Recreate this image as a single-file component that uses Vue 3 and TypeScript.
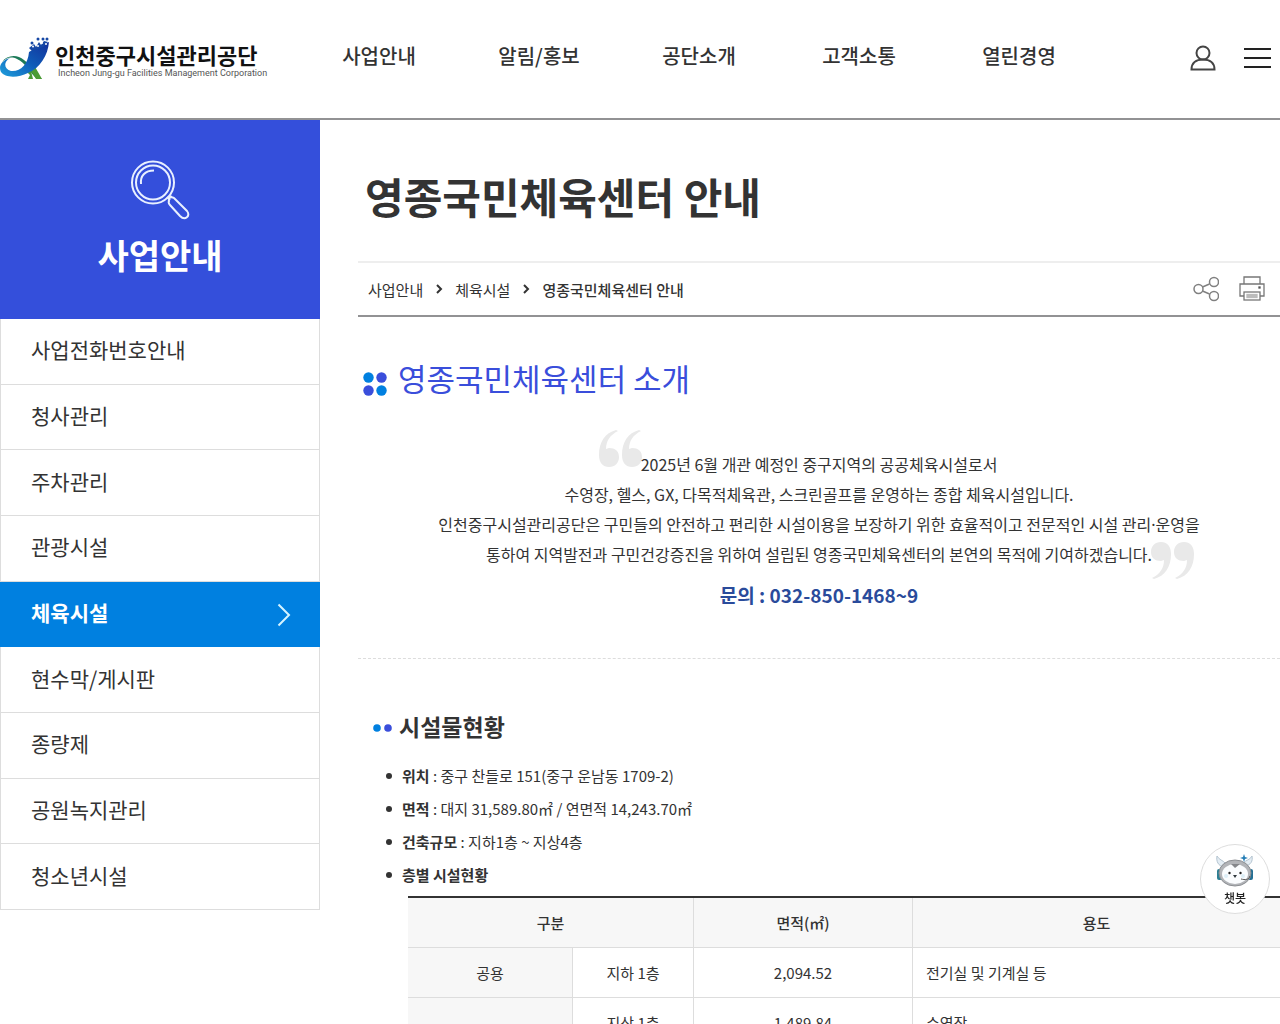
<script setup lang="ts">
interface MenuItem { label: string; active?: boolean }

const topMenu: string[] = ['사업안내', '알림/홍보', '공단소개', '고객소통', '열린경영']

const sideMenu: MenuItem[] = [
  { label: '사업전화번호안내' },
  { label: '청사관리' },
  { label: '주차관리' },
  { label: '관광시설' },
  { label: '체육시설', active: true },
  { label: '현수막/게시판' },
  { label: '종량제' },
  { label: '공원녹지관리' },
  { label: '청소년시설' },
]

const facts: { name: string; value?: string }[] = [
  { name: '위치', value: '중구 찬들로 151(중구 운남동 1709-2)' },
  { name: '면적', value: '대지 31,589.80㎡ / 연면적 14,243.70㎡' },
  { name: '건축규모', value: '지하1층 ~ 지상4층' },
  { name: '층별 시설현황' },
]

const floors: { group: string; floor: string; area: string; use: string }[] = [
  { group: '공용', floor: '지하 1층', area: '2,094.52', use: '전기실 및 기계실 등' },
  { group: '', floor: '지상 1층', area: '1,489.84', use: '수영장' },
]
</script>

<template>
  <div class="page">
    <header class="header">
      <a href="#" class="logo">
        <svg class="logo-mark" width="50" height="44" viewBox="0 0 50 44" aria-hidden="true">
          <defs>
            <linearGradient id="wave" x1="1" y1="0" x2="0" y2="1">
              <stop offset="0" stop-color="#14309a" />
              <stop offset="0.5" stop-color="#0f5cb8" />
              <stop offset="1" stop-color="#1f9fdc" />
            </linearGradient>
          </defs>
          <path d="M2 26C7 19 17 18 24 24C32 30 35 38 42 43H37C30 37 26 27 17 23C11 20 6 22 2 26Z" fill="#1c7a58" />
          <path d="M27 36L34 29L42 43H36L31 35L33 43H28L30 39Z" fill="#4b9b35" />
          <path d="M29 16L34 13L38 12L42 9L49 6C48 19 40 32 28 37C18 42 5 42 1 36C-2 30 2 24 10 22C3 26 4 33 11 35C20 36 28 29 29 16Z" fill="url(#wave)" />
          <g fill="#1748a5">
            <circle cx="32" cy="7" r="1.500" /><circle cx="38" cy="3" r="1.500" />
            <circle cx="43" cy="3" r="1.500" /><circle cx="47" cy="3" r="1.500" />
            <path d="M29 12L34 8L36 11L39 6L41 9L44 5L48 6L43 11L32 15Z" />
          </g>
          <g fill="#fff">
            <circle cx="33" cy="10.500" r="1" /><circle cx="38" cy="10" r="1" />
            <circle cx="42" cy="7" r="1" /><circle cx="46" cy="8" r="1" />
          </g>
        </svg>
        <span class="logo-text">
          <strong>인천중구시설관리공단</strong>
          <span>Incheon Jung-gu Facilities Management Corporation</span>
        </span>
      </a>
      <nav class="top-nav" aria-label="주메뉴">
        <a v-for="item in topMenu" :key="item" href="#">{{ item }}</a>
      </nav>
      <div class="tools">
        <button type="button" aria-label="로그인">
          <svg width="26" height="26" viewBox="0 0 26 26" fill="none" stroke="#444" stroke-width="2">
            <circle cx="13" cy="8" r="6.500" />
            <path d="M1.500 24.500C1.500 18 6 14.500 13 14.500S24.500 18 24.500 24.500Z" />
          </svg>
        </button>
        <button type="button" aria-label="전체메뉴">
          <svg width="27" height="22" viewBox="0 0 27 22" stroke="#222" stroke-width="2">
            <path d="M0 2H27M0 11H27M0 20H27" />
          </svg>
        </button>
      </div>
    </header>

    <div class="body">
      <aside class="side">
        <div class="side-head">
          <svg width="60" height="60" viewBox="0 0 60 60" fill="none" stroke="#e8f0ff" stroke-width="2" aria-hidden="true">
            <circle cx="23" cy="22.500" r="21" />
            <circle cx="23" cy="22.500" r="17" />
            <path d="M11 24C10 16 15 10.500 24 10.500" />
            <path d="M37 37L40 40M39 36L42 37M39 41C38 38 41 36 44 38L57 51C61 56 55 61 50 56L40 45Q38 43 39 41Z" />
          </svg>
          <h2>사업안내</h2>
        </div>
        <ul class="side-menu">
          <li v-for="item in sideMenu" :key="item.label">
            <a href="#" :class="{ active: item.active }">
              {{ item.label }}
              <svg v-if="item.active" width="14" height="24" viewBox="0 0 14 24" fill="none" stroke="#d5f4ff" stroke-width="2">
                <path d="M1.500 1.500L12 12L1.500 22.500" />
              </svg>
            </a>
          </li>
        </ul>
      </aside>

      <main class="main">
        <h1>영종국민체육센터 안내</h1>
        <div class="crumb-bar">
          <nav class="crumbs" aria-label="현재 위치">
            <a href="#">사업안내</a>
            <svg width="8" height="10" viewBox="0 0 8 10"><path d="M2 1L6 5L2 9" /></svg>
            <a href="#">체육시설</a>
            <svg width="8" height="10" viewBox="0 0 8 10"><path d="M2 1L6 5L2 9" /></svg>
            <a href="#" class="current">영종국민체육센터 안내</a>
          </nav>
          <div class="page-tools">
            <button type="button" aria-label="공유">
              <svg width="26" height="26" viewBox="0 0 26 26" fill="none" stroke="#808080" stroke-width="1.500">
                <circle cx="5.500" cy="13" r="4.500" /><circle cx="21" cy="6" r="4.500" /><circle cx="21" cy="20" r="4.500" />
                <path d="M9.500 11L16.500 8M9.500 15L16.500 18" />
              </svg>
            </button>
            <button type="button" aria-label="인쇄">
              <svg width="26" height="26" viewBox="0 0 26 26" fill="none" stroke="#777" stroke-width="1.300">
                <path d="M5 8V1H21V8M5 20H1V8H25V20H21" />
                <rect x="5" y="16" width="16" height="8" />
                <rect x="8" y="18.500" width="10" height="3" fill="#bbb" stroke="#bbb" />
                <rect x="20" y="11" width="1" height="1" fill="#555" stroke="#555" />
              </svg>
            </button>
          </div>
        </div>

        <h2 class="section-title">
          <svg width="24" height="24" viewBox="0 0 24 24" aria-hidden="true">
            <circle cx="5.500" cy="5.500" r="5.200" fill="#0080e0" /><circle cx="18.500" cy="5.500" r="5.200" fill="#3a4edb" />
            <circle cx="5.500" cy="18.500" r="5.200" fill="#3a4edb" /><circle cx="18.500" cy="18.500" r="5.200" fill="#0080e0" />
          </svg>
          영종국민체육센터 소개
        </h2>

        <div class="intro">
          <div class="quote">
            <svg class="mark open" width="44" height="37" viewBox="0 0 44 37" aria-hidden="true">
              <path d="M17 0C6 3 0 12 0 25C0 33 4 37 10 37S20 33 20 27S16 18 10 18L7 19C7 11 11 5 19 1Z" />
              <path d="M40 0C29 3 23 12 23 25C23 33 27 37 33 37S43 33 43 27S39 18 33 18L30 19C30 11 34 5 42 1Z" />
            </svg>
            <p>
              2025년 6월 개관 예정인 중구지역의 공공체육시설로서<br>
              수영장, 헬스, GX, 다목적체육관, 스크린골프를 운영하는 종합 체육시설입니다.<br>
              인천중구시설관리공단은 구민들의 안전하고 편리한 시설이용을 보장하기 위한 효율적이고 전문적인 시설 관리<span class="dot">·</span>운영을<br>
              통하여 지역발전과 구민건강증진을 위하여 설립된 영종국민체육센터의 본연의 목적에 기여하겠습니다.
            </p>
            <svg class="mark close" width="44" height="37" viewBox="0 0 44 37" aria-hidden="true">
              <g transform="rotate(180 22 18.500)">
                <path d="M17 0C6 3 0 12 0 25C0 33 4 37 10 37S20 33 20 27S16 18 10 18L7 19C7 11 11 5 19 1Z" />
                <path d="M40 0C29 3 23 12 23 25C23 33 27 37 33 37S43 33 43 27S39 18 33 18L30 19C30 11 34 5 42 1Z" />
              </g>
            </svg>
          </div>
          <p class="contact">문의 : 032-850-1468~9</p>
        </div>

        <h3 class="sub-title">
          <svg width="20" height="8" viewBox="0 0 20 8" aria-hidden="true">
            <circle cx="4" cy="4" r="3.800" fill="#0080e0" /><circle cx="15" cy="4" r="3.800" fill="#3a4edb" />
          </svg>
          시설물현황
        </h3>
        <ul class="facts">
          <li v-for="fact in facts" :key="fact.name">
            <strong>{{ fact.name }}</strong><template v-if="fact.value"> : {{ fact.value }}</template>
          </li>
        </ul>
        <table class="floors">
          <colgroup><col class="c1"><col class="c2"><col class="c3"><col></colgroup>
          <thead>
            <tr><th colspan="2" scope="col">구분</th><th scope="col">면적(㎡)</th><th scope="col">용도</th></tr>
          </thead>
          <tbody>
            <tr v-for="row in floors" :key="row.floor">
              <th scope="row">{{ row.group }}</th>
              <td>{{ row.floor }}</td>
              <td>{{ row.area }}</td>
              <td class="use">{{ row.use }}</td>
            </tr>
          </tbody>
        </table>
      </main>
    </div>

    <button type="button" class="chatbot">
      <svg width="40" height="36" viewBox="0 0 40 36" aria-hidden="true">
        <path d="M9 13C3 12 1 7 2 2C4 6 8 6 11 10ZM30 12C36 11 38 7 37 2C35 6 31 6 28 9Z" fill="#e4edf4" stroke="#b4c4d0" />
        <rect x="2" y="15" width="5" height="11" rx="2" fill="#2d7f93" /><rect x="33" y="15" width="5" height="11" rx="2" fill="#246f94" />
        <ellipse cx="20" cy="19" rx="16" ry="13" fill="#b2b4b8" stroke="#8c8f93" />
        <ellipse cx="20" cy="20" rx="13" ry="10" fill="#fafcfe" />
        <path d="M16 10H25L20 14Z" fill="#85878b" />
        <circle cx="14.500" cy="19" r="1.200" fill="#222" /><circle cx="25.500" cy="19" r="1.200" fill="#222" />
        <path d="M18 21H22L20 24Z" fill="#30383e" />
        <circle cx="11" cy="22" r="2" fill="#dceef7" /><circle cx="28" cy="22" r="2" fill="#dceef7" />
        <path d="M35 22C34 26 30 26 26 25" fill="none" stroke="#555" />
        <path d="M29 0L30 3L33 4L30 5L29 8L28 5L25 4L28 3Z" fill="#247db5" />
      </svg>
      <span>챗봇</span>
    </button>
  </div>
</template>

<style>
body {
  margin: 0;
  background: #fff;
}
</style>

<style scoped>
.page {
  height: 100vh;
  overflow: hidden;
  color: #333;
  font-family: "Noto Sans CJK KR", "Noto Sans", sans-serif;
  font-size: 16px;
}
h1, h2, h3, p, ul {
  margin: 0;
  padding: 0;
}
ul {
  list-style: none;
}
a {
  color: inherit;
  text-decoration: none;
}
button {
  padding: 0;
  border: 0;
  background: none;
  font: inherit;
  color: inherit;
  cursor: pointer;
}
svg {
  display: block;
  flex: none;
}

.header {
  display: flex;
  align-items: center;
  height: 118px;
  padding-right: 9px;
  border-bottom: 2px solid #929294;
}
.logo {
  display: flex;
  flex: none;
  gap: 5px;
  width: 299px;
  padding-bottom: 2px;
}
.logo-text {
  display: flex;
  flex-direction: column;
  padding-top: 4px;
  color: #111;
  white-space: nowrap;
}
.logo-text strong {
  font-size: 22px;
  font-weight: 700;
  line-height: 28px;
}
.logo-text span {
  padding-left: 3px;
  color: #555;
  font-family: Roboto, "Liberation Sans", sans-serif;
  font-size: 9px;
  line-height: 10px;
}
.top-nav {
  display: flex;
  flex: none;
  width: 800px;
  padding-bottom: 6px;
}
.top-nav a {
  flex: 1;
  text-align: center;
  font-size: 20px;
  font-weight: 500;
  line-height: 30px;
}
.tools {
  display: flex;
  align-items: center;
  gap: 28px;
  margin-left: auto;
  padding-bottom: 2px;
}

.body {
  display: flex;
  align-items: flex-start;
}
.side {
  flex: none;
  width: 25%;
}
.side-head {
  display: flex;
  flex-direction: column;
  align-items: center;
  gap: 10px;
  height: 159px;
  padding-top: 40px;
  background: #344fdb;
  color: #fff;
}
.side-head h2 {
  font-size: 34px;
  font-weight: 700;
  line-height: 50px;
}
.side-menu {
  display: grid;
  grid-auto-rows: 1fr;
  min-height: 591px;
}
.side-menu li {
  display: flex;
}
.side-menu a {
  display: flex;
  flex: 1;
  align-items: center;
  justify-content: space-between;
  padding: 0 28px 4px 30px;
  border: 1px solid #ddd;
  border-top: 0;
  font-size: 21px;
}
.side-menu a.active {
  border-color: #0080e0;
  background: #0080e0;
  color: #fff;
  font-weight: 700;
}
.side-menu svg {
  margin-top: 6px;
}

.main {
  flex: 1;
  min-width: 0;
  padding-left: 38px;
}
h1 {
  padding: 46px 0 35px 7px;
  font-size: 42px;
  font-weight: 700;
  line-height: 60px;
}
.crumb-bar {
  display: flex;
  align-items: center;
  justify-content: space-between;
  height: 52px;
  padding: 0 15px 0 10px;
  border-top: 2px solid #eee;
  border-bottom: 2px solid #929294;
}
.crumbs {
  display: flex;
  align-items: center;
  gap: 12px;
  font-size: 15px;
}
.crumbs svg {
  fill: none;
  stroke: #333;
  stroke-width: 2;
}
.crumbs .current {
  font-weight: 500;
}
.page-tools {
  display: flex;
  gap: 20px;
}
.section-title {
  display: flex;
  align-items: center;
  gap: 11px;
  margin-top: 39px;
  padding-left: 5px;
  color: #3a4edb;
  font-size: 31px;
  font-weight: 400;
  line-height: 44px;
}
.section-title svg {
  margin-top: 12px;
  overflow: visible;
}
.intro {
  padding: 49px 0 48px;
  border-bottom: 1px dashed #ddd;
  text-align: center;
}
.quote {
  position: relative;
  line-height: 30px;
}
.quote p {
  position: relative;
  z-index: 1;
}
.dot {
  font-family: "Noto Sans", sans-serif;
  line-height: 1;
}
.mark {
  position: absolute;
  fill: #e9e9e9;
}
.open {
  top: -19px;
  left: calc(50% - 220px);
}
.close {
  right: 86px;
  bottom: -10px;
}
.contact {
  margin-top: 11px;
  color: #2a4b9b;
  font-size: 19px;
  font-weight: 700;
  line-height: 30px;
}
.sub-title {
  display: flex;
  align-items: center;
  gap: 6px;
  margin-top: 49px;
  padding-left: 15px;
  font-size: 23px;
  font-weight: 700;
  line-height: 36px;
}
.sub-title svg {
  margin-top: 4px;
}
.facts {
  margin: 15px 0 5px 28px;
  font-size: 15px;
  line-height: 33px;
}
.facts li {
  display: flex;
  align-items: center;
  white-space: pre;
}
.facts li::before {
  width: 6px;
  height: 6px;
  margin-right: 10px;
  border-radius: 50%;
  background: #333;
  content: "";
}
.floors {
  width: calc(100% - 50px);
  margin-left: 50px;
  border-top: 2px solid #333;
  border-collapse: separate;
  border-spacing: 0;
  table-layout: fixed;
  font-size: 15px;
  line-height: 22px;
  text-align: center;
}
.c1 { width: 165px; }
.c2 { width: 121px; }
.c3 { width: 219px; }
.floors th,
.floors td {
  height: 49px;
  padding: 0 13px;
  border-right: 1px solid #ddd;
  border-bottom: 1px solid #ddd;
}
.floors th {
  background: #f7f7f7;
  font-weight: 400;
}
.floors thead th {
  font-weight: 500;
}
.floors th:last-child,
.floors td:last-child {
  border-right: 0;
}
.floors .use {
  text-align: left;
}
.chatbot {
  position: fixed;
  right: 10px;
  bottom: 110px;
  display: flex;
  flex-direction: column;
  align-items: center;
  width: 70px;
  height: 70px;
  padding-top: 9px;
  border: 1px solid #ddd;
  border-radius: 50%;
  background: #fff;
  color: #222;
  font-size: 12px;
  font-weight: 500;
  line-height: 16px;
}
</style>
